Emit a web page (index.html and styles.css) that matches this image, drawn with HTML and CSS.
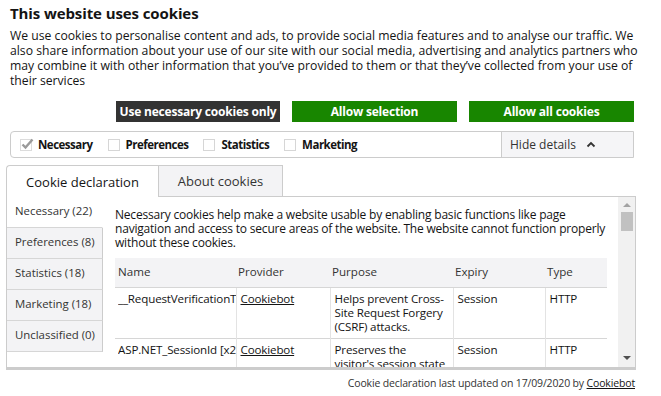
FILE: index.html
```html
<!DOCTYPE html>
<html lang="en">
<head>
<meta charset="utf-8">
<title>Cookie consent</title>
<link rel="stylesheet" href="styles.css">
</head>
<body>
<div class="dialog">
  <h1 class="title">This website uses cookies</h1>
  <p class="intro">We use cookies to personalise content and ads, to provide social media features and to analyse our traffic. We also share information about your use of our site with our social media, advertising and analytics partners who may combine it with other information that you’ve provided to them or that they’ve collected from your use of their services</p>

  <div class="actions">
    <button class="btn btn-dark">Use necessary cookies only</button>
    <button class="btn btn-green">Allow selection</button>
    <button class="btn btn-green">Allow all cookies</button>
  </div>

  <div class="levels">
    <div class="level-list">
      <label class="level"><span class="cb cb-on"><svg width="13" height="12" viewBox="0 0 13 12"><path d="M1.5 6.5 L4.5 9.5 L11.5 1.5" fill="none" stroke="#9a9a9a" stroke-width="2.4"/></svg></span>Necessary</label>
      <label class="level"><span class="cb"></span>Preferences</label>
      <label class="level"><span class="cb"></span>Statistics</label>
      <label class="level"><span class="cb"></span>Marketing</label>
    </div>
    <div class="toggle">Hide details <svg class="chev" width="10" height="7" viewBox="0 0 10 7"><path d="M1.5 5.5 L5 2 L8.5 5.5" fill="none" stroke="#333" stroke-width="1.8"/></svg></div>
  </div>

  <div class="tabs">
    <div class="tab tab-active">Cookie declaration</div>
    <div class="tab">About cookies</div>
  </div>

  <div class="panel">
    <nav class="side">
      <div class="side-item side-active">Necessary (22)</div>
      <div class="side-item">Preferences (8)</div>
      <div class="side-item">Statistics (18)</div>
      <div class="side-item">Marketing (18)</div>
      <div class="side-item">Unclassified (0)</div>
    </nav>
    <div class="content">
      <p class="desc">Necessary cookies help make a website usable by enabling basic functions like page navigation and access to secure areas of the website. The website cannot function properly without these cookies.</p>
      <table class="ctable">
        <colgroup>
          <col class="c-name"><col class="c-prov"><col class="c-purp"><col class="c-exp"><col class="c-type">
        </colgroup>
        <thead>
          <tr><th>Name</th><th>Provider</th><th>Purpose</th><th>Expiry</th><th>Type</th></tr>
        </thead>
        <tbody>
          <tr><td><div class="clip">__RequestVerificationToken</div></td><td><a href="#">Cookiebot</a></td><td class="purp">Helps prevent Cross-Site Request Forgery (CSRF) attacks.</td><td>Session</td><td>HTTP</td></tr>
          <tr><td><div class="clip">ASP.NET_SessionId [x2]</div></td><td><a href="#">Cookiebot</a></td><td class="purp">Preserves the visitor's session state across page requests.</td><td>Session</td><td>HTTP</td></tr>
        </tbody>
      </table>
    </div>
    <div class="scrollbar">
      <span class="arrow arrow-up"></span>
      <span class="thumb"></span>
      <span class="track"></span>
      <span class="arrow arrow-down"></span>
    </div>
  </div>

  <div class="footer">Cookie declaration last updated on 17/09/2020 by <a href="#">Cookiebot</a></div>
</div>
</body>
</html>
```

FILE: styles.css
```css
* { box-sizing: border-box; }
html, body { margin: 0; padding: 0; background: #fff; }
body {
  font-family: "Open Sans", "Noto Sans", "DejaVu Sans", sans-serif;
  color: #141414;
  width: 661px;
  height: 396px;
  overflow: hidden;
}
.dialog { padding: 3px 0 0 0; }

.title {
  margin: 0 0 0 10px;
  font-size: 15px;
  line-height: 20px;
  font-weight: 700;
  letter-spacing: -0.1px;
}
.intro {
  margin: 5px 0 0 10px;
  width: 630px;
  font-size: 12.2px;
  line-height: 15px;
  letter-spacing: 0;
}

.actions {
  display: flex;
  justify-content: flex-end;
  gap: 12px;
  width: 634px;
  margin-top: 13px;
}
.btn {
  width: 165px;
  height: 21px;
  border: 0;
  padding: 0;
  font-family: inherit;
  font-size: 12px;
  font-weight: 700;
  color: #fff;
  letter-spacing: -0.2px;
}
.btn-dark { background: #333333; width: 164px; }
.btn-green { background: #188600; }

.levels {
  display: flex;
  margin: 9px 0 0 10px;
  width: 624px;
  height: 27px;
  border: 1px solid #cccccc;
  border-radius: 4px 0 0 4px;
}
.level-list {
  flex: 1;
  display: flex;
  align-items: center;
  padding-left: 9px;
}
.level {
  display: flex;
  align-items: center;
  font-size: 11.5px;
  font-weight: 700;
  margin-right: 15px;
  letter-spacing: -0.5px;
}
.cb {
  width: 12px;
  height: 12px;
  border: 1px solid #d6d6d6;
  margin-right: 6px;
  position: relative;
  background: #fff;
}
.cb-on { border-color: #dcdcdc; }
.cb-on svg { position: absolute; left: 0; top: -2px; }
.toggle {
  width: 132px;
  background: #f5f5f7;
  border-left: 1px solid #cccccc;
  display: flex;
  align-items: center;
  padding-left: 8px;
  font-size: 12px;
  color: #333;
}
.chev { margin-left: 10px; }

.tabs {
  display: flex;
  margin: 6px 0 0 6px;
  height: 32px;
  align-items: flex-end;
}
.tab {
  height: 31px;
  padding: 0;
  display: flex;
  align-items: center;
  justify-content: center;
  font-size: 13px;
  color: #333;
  border: 1px solid #cccccc;
  border-bottom: 0;
  background: #f3f3f5;
  width: 125px;
}
.tab-active {
  background: #fff;
  width: 152px;
  height: 32px;
  border-right: 0;
  border-radius: 4px 0 0 0;
  color: #141414;
  position: relative;
  top: 1px;
}

.panel {
  display: flex;
  margin-left: 6px;
  width: 630px;
  height: 174px;
  border: 1px solid #cccccc;
  border-bottom: 3px solid #cccccc;
  overflow: hidden;
}
.side {
  width: 96px;
  flex: none;
  display: flex;
  flex-direction: column;
}
.side-item {
  height: 31px;
  display: flex;
  align-items: center;
  padding: 0 0 3px 8px;
  font-size: 11.4px;
  color: #333;
  background: #f3f3f5;
  border-bottom: 1px solid #d6d6d6;
  border-right: 1px solid #cccccc;
}
.side-active {
  background: #fff;
  border-right-color: #fff;
}

.content {
  flex: 1;
  padding: 11px 12px 0 12px;
  overflow: hidden;
}
.desc {
  margin: 0;
  font-size: 12px;
  line-height: 14px;
  letter-spacing: -0.2px;
}
.ctable {
  margin-top: 8px;
  width: 492px;
  border-collapse: collapse;
  table-layout: fixed;
  font-size: 11.6px;
  line-height: 14px;
}
.c-name { width: 121px; }
.c-prov { width: 94px; }
.c-purp { width: 123px; }
.c-exp { width: 92px; }
.c-type { width: 62px; }
.ctable th {
  background: #f3f3f5;
  height: 29px;
  text-align: left;
  font-weight: 400;
  padding: 0 2px;
  color: #333;
}
.ctable th:first-child { padding-left: 3px; }
.ctable td {
  vertical-align: top;
  padding: 4px 3px 4px 4px;
  border-top: 1px solid #d6d6d6;
  border-left: 1px solid #e3e3e3;
  letter-spacing: -0.15px;
}
.ctable td.purp { padding-right: 6px; }
.ctable td:first-child { border-left: 0; padding-left: 3px; padding-right: 0; }
.clip { white-space: nowrap; overflow: hidden; }
.ctable a, .footer a { color: #141414; text-decoration: underline; }

.scrollbar {
  width: 17px;
  flex: none;
  background: #f1f1f1;
  display: flex;
  flex-direction: column;
  align-items: center;
}
.arrow {
  width: 0; height: 0;
  border-left: 4px solid transparent;
  border-right: 4px solid transparent;
  margin: 5px 0;
}
.arrow-up { border-bottom: 4px solid #a3a3a3; margin-top: 6px; }
.arrow-down { border-top: 4px solid #505050; margin-bottom: 7px; }
.thumb {
  width: 12px;
  height: 19px;
  background: #c1c1c1;
}
.track { flex: 1; }

.footer {
  width: 635px;
  text-align: right;
  font-size: 10.5px;
  line-height: 14px;
  margin-top: 6px;
  color: #333;
  letter-spacing: -0.15px;
}
```
